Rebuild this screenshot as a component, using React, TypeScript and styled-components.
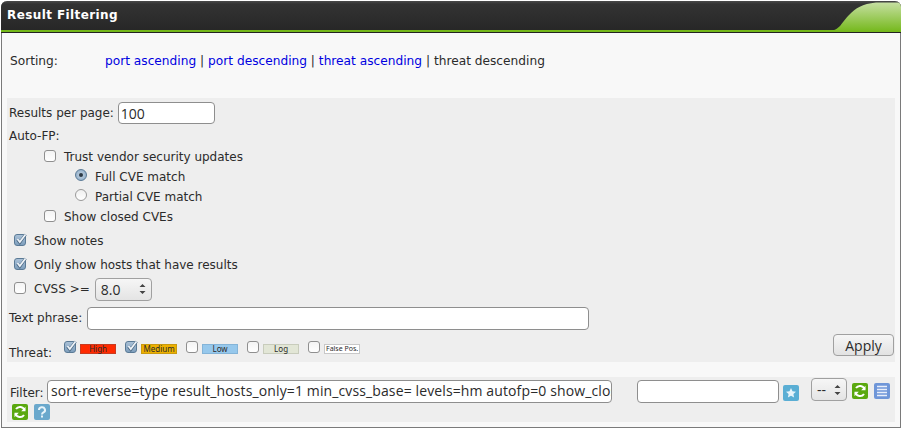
import styled, { createGlobalStyle } from "styled-components";

const GlobalStyle = createGlobalStyle`
  html, body {
    margin: 0;
    padding: 0;
    background: #fff;
    color: #2b2b2b;
    font-family: "DejaVu Sans", sans-serif;
    font-size: 12px;
  }
`;

const Panel = styled.div`
  box-sizing: border-box;
  width: 900px;
  height: 427px;
  margin-left: 1px;
  margin-top: 1px;
  border: 1px solid #7a7a7a;
  border-top: 0;
  border-radius: 6px 6px 0 0;
  background: #f8f8f8;
`;

// *** header ***

const Header = styled.div`
  position: relative;
  box-sizing: border-box;
  height: 32px;
  margin: 0 -1px;
  padding: 6px 6px 0;
  border-radius: 6px 6px 0 0;
  border-bottom: 1px solid #222;
  background: linear-gradient(#4a4a4a 0, #333 3px, #262626 100%);
  color: #fff;
  font-weight: 700;
  font-size: 12px;
  line-height: 16px;
  letter-spacing: 0.4px;
  overflow: hidden;
`;

const GreenLine = styled.div`
  position: absolute;
  left: 0;
  right: 0;
  bottom: 0;
  height: 2px;
  background: #74b81a;
`;

const Swoosh = styled.svg`
  position: absolute;
  right: 0;
  top: 0;
`;

// *** sorting ***

const SortRow = styled.div`
  display: flex;
  align-items: center;
  height: 24px;
  margin-top: 16px;
  padding-left: 8px;
  font-size: 12.2px;
`;

const SortLabel = styled.div`
  width: 95px;
`;

const SortLink = styled.a`
  color: #0000e0;
  text-decoration: none;
`;

const Separator = styled.span`
  white-space: pre;
`;

// *** options ***

const Options = styled.div`
  position: relative;
  box-sizing: border-box;
  height: 264px;
  margin: 25px 5px 0;
  padding-top: 3px;
  background: #eeeeee;
`;

const Row = styled.div<{ $height: number; $indent: number }>`
  display: flex;
  align-items: center;
  height: ${(props) => props.$height}px;
  padding-left: ${(props) => props.$indent}px;
`;

const CheckLabel = styled.span`
  margin-left: 8px;
`;

const RadioLabel = styled.span`
  margin-left: 8px;
`;

const Box = styled.span<{ $checked: boolean }>`
  position: relative;
  box-sizing: border-box;
  display: inline-flex;
  align-items: center;
  justify-content: center;
  flex: none;
  width: 12px;
  height: 12px;
  margin-top: -3px;
  border: 1px solid ${(props) => (props.$checked ? "#5a7a96" : "#8f8f8f")};
  border-radius: 3px;
  background: ${(props) =>
    props.$checked ? "linear-gradient(#a9c0d6, #7f9fbd)" : "linear-gradient(#f4f4f4, #ffffff)"};
`;

const TickMark = styled.svg`
  position: absolute;
  left: 0;
  top: -2px;
`;

const Radio = styled.span<{ $checked: boolean }>`
  box-sizing: border-box;
  display: inline-flex;
  align-items: center;
  justify-content: center;
  flex: none;
  width: 12px;
  height: 12px;
  margin-top: -4px;
  border: 1px solid ${(props) => (props.$checked ? "#5a7a96" : "#9a9a9a")};
  border-radius: 50%;
  background: ${(props) =>
    props.$checked ? "radial-gradient(#c5d5e4, #86a5c2)" : "linear-gradient(#f0f0f0, #ffffff)"};
`;

const RadioDot = styled.span`
  width: 4px;
  height: 4px;
  border-radius: 50%;
  background: #2d3a46;
`;

const TextBox = styled.input<{ $width: number; $height?: number }>`
  box-sizing: border-box;
  flex: none;
  width: ${(props) => props.$width}px;
  height: ${(props) => props.$height ?? 23}px;
  padding: 0 2px;
  border: 1px solid #8e8e8e;
  border-radius: 4px;
  background: #fff;
  color: #2b2b2b;
  font-family: "Open Sans", "Noto Sans", sans-serif;
  font-size: 14px;
  outline: none;
`;

const PhraseBox = styled(TextBox)`
  margin-left: 1px;
`;

const FilterInput = styled(TextBox)`
  margin-top: -1px;
  padding: 0 0 2px 3px;
  letter-spacing: 0.12px;
`;

const Spinner = styled.div<{ $width: number }>`
  box-sizing: border-box;
  display: flex;
  flex: none;
  align-items: center;
  justify-content: space-between;
  width: ${(props) => props.$width}px;
  height: 23px;
  padding: 0 5px;
  border: 1px solid #a0a0a0;
  border-radius: 4px;
  background: linear-gradient(#f6f6f6, #e4e4e4);
  font-family: "Open Sans", "Noto Sans", sans-serif;
  font-size: 14px;
`;

const CvssSpinner = styled(Spinner)`
  margin-left: 5px;
`;

const ThreatLabel = styled.span`
  margin-top: 8px;
`;

const Threats = styled.div`
  display: flex;
  align-items: center;
  margin-left: 12px;
  gap: 9px;
  margin-top: -1px;
`;

const Threat = styled.div`
  display: flex;
  align-items: center;
  gap: 4px;
`;

const Level = styled.div<{ $bg: string; $border: string; $size: number }>`
  box-sizing: border-box;
  width: 36px;
  height: 10px;
  border: 1px solid ${(props) => props.$border};
  background: ${(props) => props.$bg};
  color: #2b2b2b;
  font-family: "Noto Sans", sans-serif;
  font-size: ${(props) => props.$size}px;
  line-height: 7px;
  text-align: center;
  white-space: nowrap;
`;

const ApplyButton = styled.button`
  position: absolute;
  right: 1px;
  bottom: 6px;
  box-sizing: border-box;
  width: 61px;
  height: 22px;
  padding: 0;
  border: 1px solid #a0a0a0;
  border-radius: 4px;
  background: linear-gradient(#f6f6f6, #e2e2e2);
  color: #2b2b2b;
  font-family: "Open Sans", "Noto Sans", sans-serif;
  font-size: 14px;
`;

// *** filter bar ***

const FilterBar = styled.div`
  box-sizing: border-box;
  height: 45px;
  margin: 15px 5px 0;
  padding: 2px 0 0 3px;
  background: #eeeeee;
`;

const FilterRow = styled.div`
  display: flex;
  align-items: center;
  height: 25px;
`;

const FilterLabel = styled.span`
  width: 37px;
  flex: none;
  margin-top: 2px;
`;

const IconRow = styled.div`
  display: flex;
  gap: 6px;
  padding-left: 2px;
`;

const NarrowSpinner = styled(Spinner)`
  margin: -4px 5px 0 0;
`;

const ColourIcon = styled.svg`
  flex: none;
  display: block;
`;

const StarIcon = styled(ColourIcon)`
  margin: 3px 12px 0 4px;
`;

const FilterIcon = styled(ColourIcon)`
  margin-right: 6px;
  margin-top: -1px;
`;

const SecondInput = styled(TextBox)`
  margin-left: 25px;
`;

const Tick = () => (
  <TickMark width="12" height="12" viewBox="0 0 12 12">
    <path d="M2.500 6.500l2.300 3L10.500 1.500" fill="none" stroke="#4f6c86" strokeWidth="3" />
    <path d="M2.500 6l2.300 3L10.500 1.500" fill="none" stroke="#eef3f8" strokeWidth="1.800" />
  </TickMark>
);

const Arrows = () => (
  <svg width="7" height="12" viewBox="0 0 7 12">
    <path d="M3.5 1L6.5 4H.5zM3.5 11L.5 8h6z" fill="#444" />
  </svg>
);

const Refresh = () => (
  <>
    <rect width="16" height="16" rx="2" fill="#5aa80f" />
    <path
      d="M12.5 6.2A4.8 4.8 0 0 0 4 5M3.5 9.8A4.8 4.8 0 0 0 12 11"
      fill="none"
      stroke="#fff"
      strokeWidth="2"
    />
    <path d="M13.5 2.8v4.4H9.2zM2.5 13.2V8.8h4.3z" fill="#fff" />
  </>
);

const Check = ({ checked = false }: { checked?: boolean }) => (
  <Box $checked={checked}>{checked && <Tick />}</Box>
);

const threats = [
  { label: "High", checked: true, bg: "#ff2a00", border: "#c83a20", size: 8 },
  { label: "Medium", checked: true, bg: "#edb000", border: "#c99a10", size: 8 },
  { label: "Low", checked: false, bg: "#96c8ec", border: "#84b4d8", size: 8 },
  { label: "Log", checked: false, bg: "#e2e6d6", border: "#c8ccbc", size: 8 },
  { label: "False Pos.", checked: false, bg: "#ffffff", border: "#c8c8c8", size: 7 },
];

const App = () => {
  return (
    <>
      <GlobalStyle />
      <Panel>
        <Header>
          Result Filtering
          <GreenLine />
          <Swoosh width="75" height="31" viewBox="0 0 75 31">
            <defs>
              <linearGradient id="swoosh" x1="0" y1="0" x2="0" y2="1">
                <stop offset="0" stopColor="#c6dfa2" />
                <stop offset="1" stopColor="#74b81a" />
              </linearGradient>
            </defs>
            <path d="M0 30C8 30 11 28 14 25C18 20 20 17 23 14C30 7 36 3 50 1.500H75V31H0Z" fill="url(#swoosh)" />
          </Swoosh>
        </Header>

        <SortRow>
          <SortLabel>Sorting:</SortLabel>
          <SortLink>port ascending</SortLink>
          <Separator> | </Separator>
          <SortLink>port descending</SortLink>
          <Separator> | </Separator>
          <SortLink>threat ascending</SortLink>
          <Separator> | threat descending</Separator>
        </SortRow>

        <Options>
          <Row $height={24} $indent={2}>
            Results per page:&nbsp;
            <TextBox $width={97} $height={22} defaultValue="100" />
          </Row>
          <Row $height={22} $indent={2}>
            Auto-FP:
          </Row>
          <Row $height={20} $indent={37}>
            <Check />
            <CheckLabel>Trust vendor security updates</CheckLabel>
          </Row>
          <Row $height={20} $indent={68}>
            <Radio $checked>
              <RadioDot />
            </Radio>
            <RadioLabel>Full CVE match</RadioLabel>
          </Row>
          <Row $height={20} $indent={68}>
            <Radio $checked={false} />
            <RadioLabel>Partial CVE match</RadioLabel>
          </Row>
          <Row $height={20} $indent={37}>
            <Check />
            <CheckLabel>Show closed CVEs</CheckLabel>
          </Row>
          <Row $height={28} $indent={7}>
            <Check checked />
            <CheckLabel>Show notes</CheckLabel>
          </Row>
          <Row $height={20} $indent={7}>
            <Check checked />
            <CheckLabel>Only show hosts that have results</CheckLabel>
          </Row>
          <Row $height={28} $indent={7}>
            <Check />
            <CheckLabel>CVSS &gt;=</CheckLabel>
            <CvssSpinner $width={57}>
              8.0
              <Arrows />
            </CvssSpinner>
          </Row>
          <Row $height={30} $indent={2}>
            Text phrase:&nbsp;
            <PhraseBox $width={502} $height={23} />
          </Row>
          <Row $height={32} $indent={2}>
            <ThreatLabel>Threat:</ThreatLabel>
            <Threats>
              {threats.map((threat) => (
                <Threat key={threat.label}>
                  <Check checked={threat.checked} />
                  <Level $bg={threat.bg} $border={threat.border} $size={threat.size}>
                    {threat.label}
                  </Level>
                </Threat>
              ))}
            </Threats>
          </Row>
          <ApplyButton>Apply</ApplyButton>
        </Options>

        <FilterBar>
          <FilterRow>
            <FilterLabel>Filter:</FilterLabel>
            <FilterInput
              $width={565}
              defaultValue="sort-reverse=type result_hosts_only=1 min_cvss_base= levels=hm autofp=0 show_closed_cves=0"
            />
            <SecondInput $width={142} />
            <StarIcon width="16" height="16" viewBox="0 0 16 16">
              <rect width="16" height="16" rx="2" fill="#5aaed4" />
              <path
                d="M8 3l1.5 3.3 3.5.4-2.6 2.4.7 3.5L8 10.8 4.9 12.600l.7-3.500L3 6.700l3.500-.4z"
                fill="#e8f4fa"
              />
            </StarIcon>
            <NarrowSpinner $width={36}>
              --
              <Arrows />
            </NarrowSpinner>
            <FilterIcon width="16" height="16" viewBox="0 0 16 16">
              <Refresh />
            </FilterIcon>
            <FilterIcon width="16" height="16" viewBox="0 0 16 16">
              <rect width="16" height="16" rx="2" fill="#6f96d8" />
              <path d="M3 3.500h10M3 6.500h10M3 9.500h10M3 12.500h10" stroke="#e8eefa" strokeWidth="1.500" />
            </FilterIcon>
          </FilterRow>
          <IconRow>
            <ColourIcon width="16" height="16" viewBox="0 0 16 16">
              <Refresh />
            </ColourIcon>
            <ColourIcon width="16" height="16" viewBox="0 0 16 16">
              <rect width="16" height="16" rx="2" fill="#6aa8cc" />
              <path d="M5 6a3 2.800 0 1 1 4.500 2.400C8.500 9 8 9.500 8 10.500" fill="none" stroke="#e8f4fa" strokeWidth="2" />
              <rect x="7" y="11.500" width="2" height="2" fill="#e8f4fa" />
            </ColourIcon>
          </IconRow>
        </FilterBar>
      </Panel>
    </>
  );
};

export default App;
